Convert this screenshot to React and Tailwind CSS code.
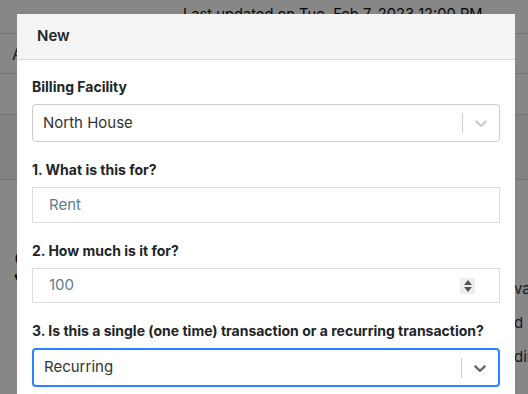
import React from "react";

const Chevron = ({ color }) => (
  <svg width="20" height="20" viewBox="0 0 20 20" fill={color}>
    <path d="M4.516 7.548c0.436-0.446 1.043-0.481 1.576 0l3.908 3.747 3.908-3.747c0.533-0.481 1.141-0.446 1.574 0 0.436 0.445 0.408 1.197 0 1.615-0.406 0.418-4.695 4.502-4.695 4.502-0.217 0.223-0.502 0.335-0.787 0.335s-0.57-0.112-0.789-0.335c0 0-4.287-4.084-4.695-4.502s-0.436-1.17 0-1.615z" />
  </svg>
);

const Select = ({ value, focused }) => (
  <div
    className={
      focused
        ? "flex items-center h-[39px] rounded-[4px] border-2 border-[#2684ff] bg-white"
        : "flex items-center h-[38px] rounded-[4px] border border-[#cccccc] bg-white"
    }
  >
    <div className="flex-1 px-[10px] text-[15px] text-[#333333]">{value}</div>
    <span className="w-px h-[20px] bg-[#cccccc]"></span>
    <div className="px-[8px] flex items-center">
      <Chevron color={focused ? "#666666" : "#cccccc"} />
    </div>
  </div>
);

const Field = ({ label, children }) => (
  <div className="mb-[18px]">
    <label className="block mb-[7px] text-[14px] leading-[20px] font-bold text-[#212529]">
      {label}
    </label>
    {children}
  </div>
);

export default function App() {
  return (
    <div
      className="relative w-[528px] h-[394px] overflow-hidden bg-white"
      style={{ fontFamily: "Inter, 'Noto Sans', sans-serif" }}
    >
      {/* page behind the modal */}
      <div className="text-[#111]">
        <div className="h-[33px] pl-[183px] pt-[3px] text-[14.7px]">
          Last updated on Tue, Feb 7, 2023 12:00 PM
        </div>
        <div className="h-[40px] border-t border-[#dddddd] pl-[12px] pt-[8px] text-[16px] text-[#333]">
          A
        </div>
        <div className="h-[41px] border-t border-[#dddddd]"></div>
        <div className="h-[65px] border-t border-[#dddddd] bg-[#f8f8f8]"></div>
        <div className="border-t border-[#dddddd] flex justify-between">
          <div className="pl-[12px] pt-[56px] text-[46px] leading-[60px] text-[#111]">S</div>
          <div className="pt-[92px] text-[15px] leading-[34px] text-[#333] w-[14px] overflow-hidden whitespace-nowrap">
            <div>va</div>
            <div>d</div>
            <div>din</div>
          </div>
        </div>
      </div>

      {/* overlay */}
      <div className="absolute inset-0 bg-black/[0.47]"></div>

      {/* modal */}
      <div className="absolute left-[17px] top-[14px] w-[498px] bg-white">
        <div className="h-[46px] flex items-center px-[20px] bg-[#f4f4f4] border-b border-[#d3dbe0]">
          <span className="text-[15px] font-semibold text-[#212529]">New</span>
        </div>
        <div className="px-[15px] pt-[17px]">
          <Field label="Billing Facility">
            <Select value="North House" />
          </Field>
          <Field label="1. What is this for?">
            <div className="h-[36px] border border-[#dddddd] flex items-center px-[16px] text-[15px] text-[#5c7d91]">
              Rent
            </div>
          </Field>
          <Field label="2. How much is it for?">
            <div className="h-[35px] border border-[#dddddd] flex items-center px-[16px] text-[15px] text-[#5c7d91]">
              <span className="flex-1">100</span>
              <span className="w-[15px] h-[16px] bg-[#eeeeee] flex flex-col items-center justify-center gap-[2px] mr-[8px]">
                <svg width="8" height="5" viewBox="0 0 8 5"><path d="M0 5 L4 0 L8 5 Z" fill="#555" /></svg>
                <svg width="8" height="5" viewBox="0 0 8 5"><path d="M0 0 L4 5 L8 0 Z" fill="#555" /></svg>
              </span>
            </div>
          </Field>
          <Field label="3. Is this a single (one time) transaction or a recurring transaction?">
            <Select value="Recurring" focused />
          </Field>
        </div>
      </div>
    </div>
  );
}
